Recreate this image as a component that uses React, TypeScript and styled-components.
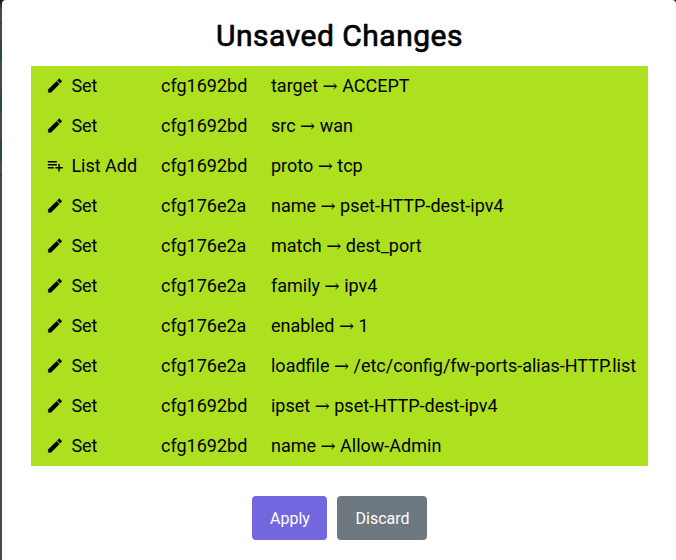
import React from "react";
import styled, { createGlobalStyle } from "styled-components";

const Global = createGlobalStyle`
  body { margin: 0; background: #4a4a4c; font-family: Roboto, sans-serif; color: #000; overflow: hidden; }
  * { box-sizing: border-box; }
`;
const Backdrop = styled.div`
  height: 560px; padding-left: 2px;
  background:
    linear-gradient(#2e4c38, #2e4c38) 0 39px / 2px 23px no-repeat,
    linear-gradient(#2e4c38, #2e4c38) 0 89px / 2px 23px no-repeat,
    linear-gradient(#2e4c38, #2e4c38) 0 139px / 2px 23px no-repeat,
    linear-gradient(#37373a, #37373a) 0 23px / 2px 1px no-repeat,
    linear-gradient(#37373a, #37373a) 0 175px / 2px 1px no-repeat,
    linear-gradient(#1b1b1d, #4a4a4c 10px);
`;
const Dialog = styled.main`
  height: 560px; padding: 17px 28px 0 29px; background: #fff;
  border-radius: 4px 4px 0 0; display: flex; flex-direction: column; align-items: center;
`;
const Title = styled.h2`
  margin: 0; height: 49px; line-height: 38px; font-size: 30px; font-weight: 400; letter-spacing: 0.5px;
  -webkit-text-stroke: 0.7px #000;
`;
const Changes = styled.div`
  width: 617px; background: #ade11f; display: grid; grid-auto-rows: 40px;
`;
const Row = styled.div`
  display: grid; grid-template-columns: 25.4px 89.6px 110px 1fr; padding-left: 15px;
  align-items: center; height: 40px; font-size: 18px; line-height: 20px; white-space: pre; padding-bottom: 1px;
  svg { width: 18px; height: 18px; display: block; }
`;
const Arrow = styled.span`font-family: "DejaVu Serif", serif; line-height: 1;`;
const Actions = styled.div`display: flex; gap: 10px; margin-top: 30px;`;
const Button = styled.button<{ $tone: string; $width: number }>`
  width: ${p => p.$width}px; height: 44px; border: 0; border-radius: 4px; padding: 0 0 0 1px;
  background: ${p => p.$tone}; color: #fff; font: 400 16px Roboto, sans-serif;
`;
const Pencil = () => <svg viewBox="0 0.5 24 24"><path d="M20.71 7.04c.39-.39.39-1.04 0-1.41l-2.34-2.34c-.37-.39-1.02-.39-1.41 0l-1.84 1.83 3.75 3.75M3 17.25V21h3.75L17.81 9.93l-3.75-3.75L3 17.25z" stroke="#000" strokeWidth="0.4" /></svg>;
const ListAdd = () => <svg viewBox="-0.4 0.6 24 24"><path d="M2 16h8v-2H2m16 0v-4h-2v4h-4v2h4v4h2v-4h4v-2M14 6H2v2h12m0 2H2v2h12v-2z" /></svg>;
const data = [
  ["Set", "cfg1692bd", "target", "ACCEPT"],
  ["Set", "cfg1692bd", "src", "wan"],
  ["List Add", "cfg1692bd", "proto", "tcp"],
  ["Set", "cfg176e2a", "name", "pset-HTTP-dest-ipv4"],
  ["Set", "cfg176e2a", "match", "dest_port"],
  ["Set", "cfg176e2a", "family", "ipv4"],
  ["Set", "cfg176e2a", "enabled", "1"],
  ["Set", "cfg176e2a", "loadfile", "/etc/config/fw-ports-alias-HTTP.list"],
  ["Set", "cfg1692bd", "ipset", "pset-HTTP-dest-ipv4"],
  ["Set", "cfg1692bd", "name", "Allow-Admin"],
];
export default function App() {
  return <><Global /><Backdrop><Dialog>
    <Title>Unsaved Changes</Title>
    <Changes>{data.map(([action, section, option, value], i) => <Row key={i}>
      {action === "Set" ? <Pencil /> : <ListAdd />}<span>{action}</span><span>{section}</span>
      <span>{option} <Arrow>→</Arrow> {value}</span>
    </Row>)}</Changes>
    <Actions><Button $tone="#7367e0" $width={75}>Apply</Button><Button $tone="#6e7880" $width={90}>Discard</Button></Actions>
  </Dialog></Backdrop></>;
}
